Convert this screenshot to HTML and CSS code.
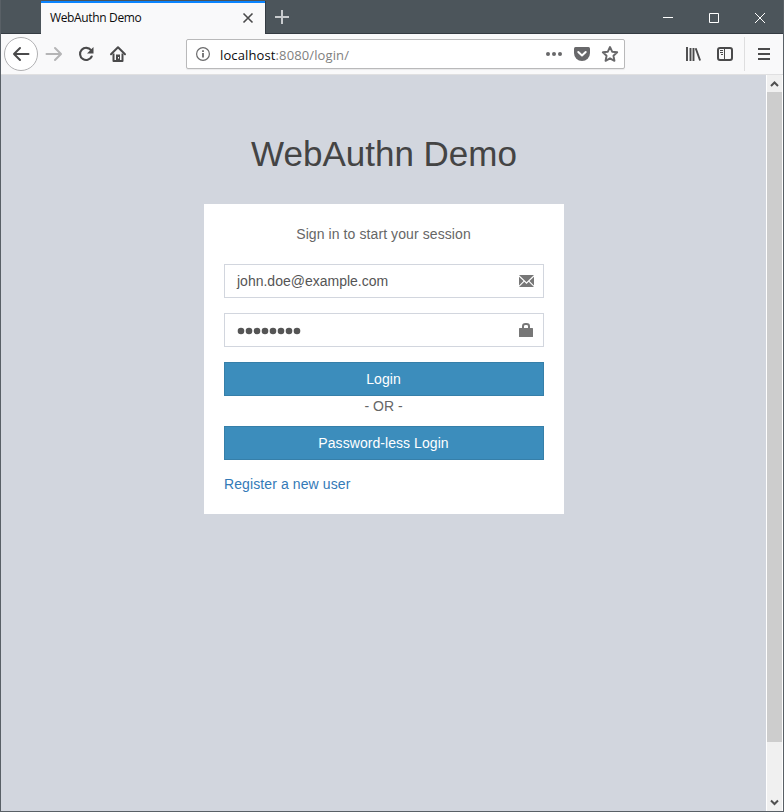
FILE: index.html
```html
<!DOCTYPE html>
<html lang="en">
<head>
<meta charset="utf-8">
<title>WebAuthn Demo</title>
<link rel="stylesheet" href="styles.css">
</head>
<body>
<div class="window">
  <header class="titlebar">
    <div class="tab">
      <span class="tab-title">WebAuthn Demo</span>
      <svg class="tab-close" width="12" height="12" viewBox="0 0 12 12"><path d="M1.500 1.500l9 9M10.500 1.500l-9 9" stroke="#4a4a4b" stroke-width="1.600" fill="none"/></svg>
    </div>
    <svg class="new-tab" width="14" height="14" viewBox="0 0 14 14"><path d="M7 0v14M0 7h14" stroke="#c8cbce" stroke-width="2"/></svg>
    <div class="controls">
      <svg width="46" height="34" viewBox="0 0 46 34"><path d="M18 17.500h10" stroke="#fff"/></svg>
      <svg width="46" height="34" viewBox="0 0 46 34"><path d="M18.500 13.500h9v9h-9z" stroke="#fff" fill="none"/></svg>
      <svg width="46" height="34" viewBox="0 0 46 34"><path d="M18 13l10 10M28 13l-10 10" stroke="#fff" stroke-width="1"/></svg>
    </div>
  </header>
  <nav class="toolbar">
    <svg class="back" width="34" height="34" viewBox="0 0 34 34"><circle cx="17" cy="17" r="16.500" fill="#fff" stroke="#b0b0b2"/><path d="M24.500 17H10M16 11L10 17l6 6" fill="none" stroke="#4a4a4b" stroke-width="2" stroke-linecap="round" stroke-linejoin="round"/></svg>
    <svg class="tool" width="32" height="32" viewBox="0 0 32 32"><path d="M8.500 16H22.500M17 10l6 6-6 6" fill="none" stroke="#b5b5b6" stroke-width="2" stroke-linecap="round" stroke-linejoin="round"/></svg>
    <svg class="tool" width="32" height="32" viewBox="0 0 32 32"><path d="M21 12.200A6.100 6.100 0 1 0 21.700 18.500" fill="none" stroke="#4a4a4b" stroke-width="2.100" stroke-linecap="round"/><path d="M23.500 9v6.500H17z" fill="#4a4a4b"/></svg>
    <svg class="tool" width="32" height="32" viewBox="0 0 32 32"><path d="M9 16.200L16 9.200l7 7" fill="none" stroke="#4a4a4b" stroke-width="2" stroke-linecap="round" stroke-linejoin="round"/><path d="M11.500 15.500V23h9v-7.500" fill="none" stroke="#4a4a4b" stroke-width="2" stroke-linejoin="round"/><path d="M14 16.500h4V23h-4z" fill="#4a4a4b"/><path d="M16 19h1v1.500h-1z" fill="#fff"/></svg>
    <div class="urlbar">
      <svg class="info" width="14" height="14" viewBox="0 0 14 14"><circle cx="7" cy="7" r="6.400" fill="none" stroke="#6b6b6c" stroke-width="1.200"/><path d="M7 6v4.500M7 3.200v1.800" stroke="#6b6b6c" stroke-width="1.800"/></svg>
      <span class="url"><b>localhost</b>:8080/login/</span>
      <svg class="page-actions" width="74" height="18" viewBox="0 0 74 18"><g fill="#68686a"><circle cx="3" cy="9" r="2"/><circle cx="9" cy="9" r="2"/><circle cx="15" cy="9" r="2"/><path d="M30.500 2h13q1.500 0 1.500 1.500V8a8 8 0 0 1-16 0V3.500Q29 2 30.500 2z"/></g><path d="M33.300 7l3.700 3.500L40.700 7" fill="none" stroke="#fff" stroke-width="2" stroke-linecap="round" stroke-linejoin="round"/><path d="M65 2l2.150 4.700 5.050.6-3.750 3.450 1 5.050L65 13.300l-4.450 2.500 1-5.050-3.750-3.450 5.050-.6z" fill="none" stroke="#68686a" stroke-width="1.900" stroke-linejoin="round"/></svg>
    </div>
    <svg class="library" width="16" height="14" viewBox="0 0 16 14"><path d="M2 0v14M5.500 1v13M8.500 1v13M10.700 1.300l4.400 12.200" stroke="#4a4a4b" stroke-width="1.900" fill="none"/></svg>
    <svg class="sidebar" width="16" height="14" viewBox="0 0 16 14"><rect x="1" y="1" width="14" height="12" rx="2" fill="none" stroke="#4a4a4b" stroke-width="2"/><path d="M7.500 1v12M3 3.500h3M3 5.500h3M4 7.500h2" stroke="#4a4a4b"/></svg>
    <span class="divider"></span>
    <svg class="menu" width="12" height="12" viewBox="0 0 12 12"><path d="M0 1h12M0 6h12M0 11h12" stroke="#4a4a4b" stroke-width="2"/></svg>
  </nav>
  <div class="viewport">
    <main class="page">
      <h1 class="logo">WebAuthn Demo</h1>
      <section class="card">
        <p class="message">Sign in to start your session</p>
        <div class="field"><span>john.doe@example.com</span>
          <svg width="16" height="14" viewBox="0 0 16 14"><path d="M1 1h15L8.500 8.200zM1 2.700L5.500 7 1 11.400zM16 2.700V11.400L11.500 7zM6.300 7.800L8.500 9.900l2.200-2.100L16 13H1z" fill="#777"/></svg>
        </div>
        <div class="field">
          <svg class="dots" width="64" height="14" viewBox="0 0 64 14"><g fill="#555"><circle cx="4" cy="8" r="3.300"/><circle cx="12" cy="8" r="3.300"/><circle cx="20" cy="8" r="3.300"/><circle cx="28" cy="8" r="3.300"/><circle cx="36" cy="8" r="3.300"/><circle cx="44" cy="8" r="3.300"/><circle cx="52" cy="8" r="3.300"/><circle cx="60" cy="8" r="3.300"/></g></svg>
          <svg width="16" height="14" viewBox="0 0 16 14"><path d="M1.500 5h13q.5 0 .5.500v8q0 .5-.5.500h-13q-.5 0-.5-.5v-8q0-.5.500-.5z" fill="#777"/><path d="M5 6V3.300Q5 1 7.500 1h1q2.500 0 2.500 2.300V6" fill="none" stroke="#777" stroke-width="2"/></svg>
        </div>
        <button class="btn">Login</button>
        <p class="or">- OR -</p>
        <button class="btn">Password-less Login</button>
        <a class="register">Register a new user</a>
      </section>
    </main>
    <div class="scrollbar">
      <svg width="15" height="17" viewBox="0 0 15 17"><path d="M4 11l3.500-3.500L11 11" fill="none" stroke="#505050" stroke-width="2"/></svg>
      <div class="thumb"></div>
      <svg class="down" width="15" height="17" viewBox="0 0 15 17"><path d="M4 6.500L7.500 10 11 6.500" fill="none" stroke="#505050" stroke-width="2"/></svg>
    </div>
  </div>
</div>
</body>
</html>
```
FILE: styles.css
```css
* { box-sizing: border-box; }
body { margin: 0; font-family: "Liberation Sans", Arial, sans-serif; font-size: 14px; line-height: 20px; color: #666; }
svg { display: block; flex: none; }
p, h1 { margin: 0; }
.window { width: 784px; height: 812px; display: flex; flex-direction: column; border: 1px solid #596066; border-top: 0; overflow: hidden; }
.titlebar { height: 34px; flex: none; display: flex; background: #4c555b; border-bottom: 1px solid #343b42; padding-left: 40px; }
.tab { width: 224px; height: 33px; margin-top: 1px; border-top: 2px solid #0a84ff; background: #f9f9fa; display: flex; align-items: center; justify-content: space-between; padding: 0 11px 2px 9px; box-shadow: 1px 0 #343b42; }
.tab-title { font: 12px/16px "Open Sans", sans-serif; letter-spacing: -0.35px; color: #0c0c0d; white-space: nowrap; }
.new-tab { margin: 10px 0 0 10px; }
.controls { display: flex; margin-left: auto; }
.toolbar { height: 41px; flex: none; display: flex; align-items: center; background: #f9f9fa; border-bottom: 1px solid #e0e0e1; padding-left: 3px; }
.urlbar { width: 439px; height: 30px; margin-left: 52px; display: flex; align-items: center; background: #fff; border: 1px solid #b9b9ba; border-radius: 2px; padding: 0 5px 0 9px; box-shadow: 0 1px 1px #0001; }
.url { margin-left: 10px; font: 13px/18px "Open Sans", sans-serif; letter-spacing: 0.12px; color: #7f7f80; white-space: nowrap; padding-top: 2px; }
.url b { font-weight: 400; color: #0c0c0d; }
.page-actions { margin-left: auto; }
.library { margin-left: 60px; }
.sidebar { margin-left: 16px; }
.divider { width: 1px; height: 34px; margin-left: 11px; background: #dededf; }
.menu { margin-left: 13px; }
.viewport { flex: 1; display: flex; min-height: 0; }
.page { width: 765px; background: #d2d6de; padding: 54px 0 0 203px; }
.logo { width: 360px; margin-bottom: 25px; font-size: 35px; line-height: 50px; font-weight: 400; color: #444; text-align: center; }
.card { width: 360px; height: 310px; padding: 20px; background: #fff; }
.message { text-align: center; margin-bottom: 20px; padding-right: 1px; letter-spacing: 0.09px; }
.field { height: 34px; margin-bottom: 15px; padding: 0 9px 0 12px; border: 1px solid #d2d6de; display: flex; align-items: center; justify-content: space-between; color: #555; }
.btn { display: block; width: 100%; height: 34px; padding: 0 1px 0 0; border: 1px solid #367fa9; background: #3c8dbc; color: #fff; font: inherit; letter-spacing: 0.06px; }
.or { text-align: center; margin-bottom: 10px; padding-right: 1px; }
.register { display: block; margin-top: 14px; color: #337ab7; letter-spacing: 0.1px; }
.scrollbar { width: 17px; background: #f0f0f0; border: solid #fff; border-width: 0 1px; display: flex; flex-direction: column; }
.thumb { height: 650px; background: #cdcdcd; }
.down { margin-top: auto; }
```
